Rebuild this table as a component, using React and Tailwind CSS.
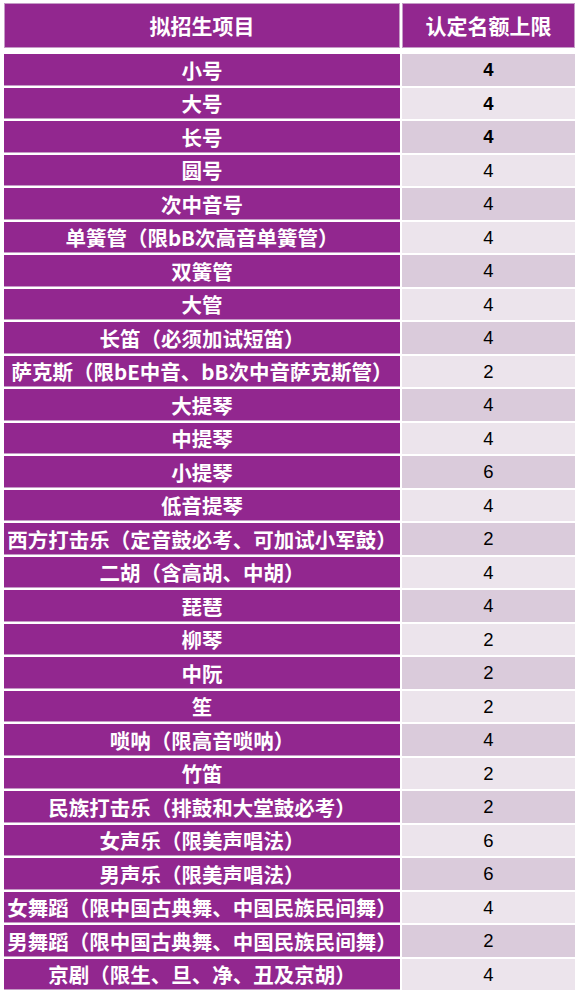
import React from "react";

const rows = [
  ["小号", "4", true],
  ["大号", "4", true],
  ["长号", "4", true],
  ["圆号", "4"],
  ["次中音号", "4"],
  ["单簧管（限bB次高音单簧管）", "4"],
  ["双簧管", "4"],
  ["大管", "4"],
  ["长笛（必须加试短笛）", "4"],
  ["萨克斯（限bE中音、bB次中音萨克斯管）", "2"],
  ["大提琴", "4"],
  ["中提琴", "4"],
  ["小提琴", "6"],
  ["低音提琴", "4"],
  ["西方打击乐（定音鼓必考、可加试小军鼓）", "2"],
  ["二胡（含高胡、中胡）", "4"],
  ["琵琶", "4"],
  ["柳琴", "2"],
  ["中阮", "2"],
  ["笙", "2"],
  ["唢呐（限高音唢呐）", "4"],
  ["竹笛", "2"],
  ["民族打击乐（排鼓和大堂鼓必考）", "2"],
  ["女声乐（限美声唱法）", "6"],
  ["男声乐（限美声唱法）", "6"],
  ["女舞蹈（限中国古典舞、中国民族民间舞）", "4"],
  ["男舞蹈（限中国古典舞、中国民族民间舞）", "2"],
  ["京剧（限生、旦、净、丑及京胡）", "4"],
];

const cjk = { fontFamily: '"Noto Sans CJK SC", "Noto Sans", sans-serif' };
const num = { fontFamily: '"Liberation Sans", Arial, sans-serif' };

export default function App() {
  return (
    <div className="w-[581px] h-[1002px] bg-white pt-[3px] pl-[4px]">
      <div className="flex gap-[2px] h-[45px]">
        <div
          className="w-[396px] bg-[#92278f] border border-[#c59bc6] flex items-center justify-center text-white font-bold text-[21px] leading-none"
          style={cjk}
        >
          拟招生项目
        </div>
        <div
          className="w-[173px] bg-[#92278f] border border-[#c59bc6] flex items-center justify-center text-white font-bold text-[21px] leading-none"
          style={cjk}
        >
          认定名额上限
        </div>
      </div>
      <div className="mt-[6px] flex flex-col gap-[2px]">
        {rows.map(([name, n, bold], i) => (
          <div key={i} className="flex gap-[2px] h-[31.5px]">
            <div
              className="w-[396px] bg-[#92278f] border-b border-[#c59bc6] flex items-center justify-center text-white font-bold text-[20.5px] leading-none whitespace-nowrap pt-[1px]"
              style={cjk}
            >
              {name}
            </div>
            <div
              className={
                "w-[173px] flex items-center justify-center text-black text-[18.5px] leading-none pt-[1px] " +
                (i % 2 === 0 ? "bg-[#dacbdb] " : "bg-[#ece4ec] ") +
                (bold ? "font-bold" : "font-normal")
              }
              style={num}
            >
              {n}
            </div>
          </div>
        ))}
      </div>
    </div>
  );
}
